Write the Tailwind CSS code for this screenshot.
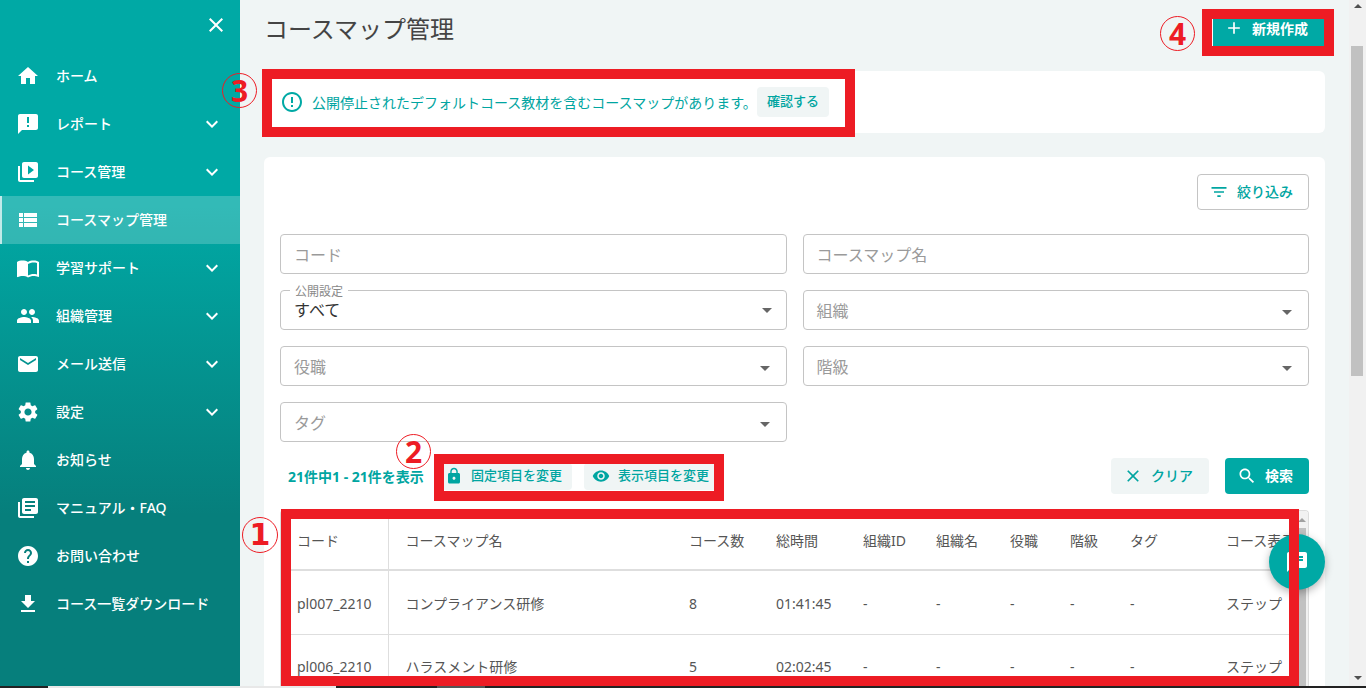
<!DOCTYPE html>
<html lang="ja">
<head>
<meta charset="utf-8">
<script src="https://cdn.jsdelivr.net/npm/@tailwindcss/browser@4"></script>
<title>コースマップ管理</title>
</head>
<body class="relative h-[688px] w-[1366px] overflow-hidden bg-[#f0f5f5] font-['Noto_Sans','Noto_Sans_CJK_JP',sans-serif] text-[14px] text-[#555]">
<div class="flex h-[686px]">
  <!-- Sidebar -->
  <aside class="flex w-[240px] shrink-0 flex-col bg-gradient-to-b from-[#00a9a5] from-30% to-[#067f7c] to-75% text-white">
    <div class="flex h-[52px] justify-end pr-[12px] pt-[13px]">
      <svg class="h-[24px] w-[24px]" viewBox="0 0 24 24" fill="currentColor"><path d="M19 6.41L17.59 5 12 10.59 6.41 5 5 6.41 10.59 12 5 17.59 6.41 19 12 13.41 17.59 19 19 17.59 13.41 12z"/></svg>
    </div>
    <nav class="flex flex-col font-medium">
      <a class="flex h-[48px] items-center pb-[2px] pl-[16px]"><svg class="mr-[16px] mt-[2px] h-[24px] w-[24px]" viewBox="0 0 24 24" fill="currentColor"><path d="M10 20v-6h4v6h5v-8h3L12 3 2 12h3v8z"/></svg>ホーム</a>
      <a class="flex h-[48px] items-center pb-[2px] pl-[16px] pr-[16px]"><svg class="mr-[16px] mt-[2px] h-[24px] w-[24px]" viewBox="0 0 24 24" fill="currentColor"><path d="M20 2H4c-1.1 0-1.99.9-1.99 2L2 22l4-4h14c1.1 0 2-.9 2-2V4c0-1.1-.9-2-2-2zm-7 9h-2V5h2v6zm0 4h-2v-2h2v2z"/></svg>レポート<svg class="ml-auto mt-[2px] h-[24px] w-[24px]" viewBox="0 0 24 24" fill="currentColor"><path d="M16.59 8.59L12 13.17 7.41 8.59 6 10l6 6 6-6z"/></svg></a>
      <a class="flex h-[48px] items-center pb-[2px] pl-[16px] pr-[16px]"><svg class="mr-[16px] mt-[2px] h-[24px] w-[24px]" viewBox="0 0 24 24" fill="currentColor"><path d="M4 6H2v14c0 1.1.9 2 2 2h14v-2H4V6zm16-4H8c-1.1 0-2 .9-2 2v12c0 1.1.9 2 2 2h12c1.1 0 2-.9 2-2V4c0-1.1-.9-2-2-2zm-8 12.5v-9l6 4.5-6 4.5z"/></svg>コース管理<svg class="ml-auto mt-[2px] h-[24px] w-[24px]" viewBox="0 0 24 24" fill="currentColor"><path d="M16.59 8.59L12 13.17 7.41 8.59 6 10l6 6 6-6z"/></svg></a>
      <a class="flex h-[48px] items-center border-l-2 border-white/70 bg-white/20 pb-[2px] pl-[14px]"><svg class="mr-[16px] mt-[2px] h-[24px] w-[24px]" viewBox="0 0 24 24" fill="currentColor"><path d="M3 14h4v-4H3v4zm0 5h4v-4H3v4zM3 9h4V5H3v4zm5 5h13v-4H8v4zm0 5h13v-4H8v4zM8 5v4h13V5H8z"/></svg>コースマップ管理</a>
      <a class="flex h-[48px] items-center pb-[2px] pl-[16px] pr-[16px]"><svg class="mr-[16px] mt-[2px] h-[24px] w-[24px]" viewBox="0 0 24 24" fill="currentColor"><path d="M21 5c-1.11-.35-2.33-.5-3.5-.5-1.95 0-4.05.4-5.5 1.5-1.45-1.1-3.55-1.5-5.5-1.5S2.45 4.9 1 6v14.65c0 .25.25.5.5.5.1 0 .15-.05.25-.05C3.1 20.45 5.05 20 6.5 20c1.95 0 4.05.4 5.5 1.5 1.35-.85 3.8-1.5 5.5-1.5 1.65 0 3.35.3 4.75 1.05.1.05.15.05.25.05.25 0 .5-.25.5-.5V6c-.6-.45-1.25-.75-2-1zm0 13.5c-1.1-.35-2.3-.5-3.5-.5-1.7 0-4.15.65-5.5 1.5V8c1.35-.85 3.8-1.5 5.5-1.5 1.2 0 2.4.15 3.5.5v11.5z"/></svg>学習サポート<svg class="ml-auto mt-[2px] h-[24px] w-[24px]" viewBox="0 0 24 24" fill="currentColor"><path d="M16.59 8.59L12 13.17 7.41 8.59 6 10l6 6 6-6z"/></svg></a>
      <a class="flex h-[48px] items-center pb-[2px] pl-[16px] pr-[16px]"><svg class="mr-[16px] mt-[2px] h-[24px] w-[24px]" viewBox="0 0 24 24" fill="currentColor"><path d="M16 11c1.66 0 2.99-1.34 2.99-3S17.66 5 16 5c-1.66 0-3 1.34-3 3s1.34 3 3 3zm-8 0c1.66 0 2.99-1.34 2.99-3S9.66 5 8 5C6.34 5 5 6.34 5 8s1.34 3 3 3zm0 2c-2.33 0-7 1.17-7 3.5V19h14v-2.5c0-2.33-4.67-3.5-7-3.5zm8 0c-.29 0-.62.02-.97.05 1.16.84 1.97 1.97 1.97 3.45V19h6v-2.5c0-2.33-4.67-3.5-7-3.5z"/></svg>組織管理<svg class="ml-auto mt-[2px] h-[24px] w-[24px]" viewBox="0 0 24 24" fill="currentColor"><path d="M16.59 8.59L12 13.17 7.41 8.59 6 10l6 6 6-6z"/></svg></a>
      <a class="flex h-[48px] items-center pb-[2px] pl-[16px] pr-[16px]"><svg class="mr-[16px] mt-[2px] h-[24px] w-[24px]" viewBox="0 0 24 24" fill="currentColor"><path d="M20 4H4c-1.1 0-1.99.9-1.99 2L2 18c0 1.1.9 2 2 2h16c1.1 0 2-.9 2-2V6c0-1.1-.9-2-2-2zm0 4l-8 5-8-5V6l8 5 8-5v2z"/></svg>メール送信<svg class="ml-auto mt-[2px] h-[24px] w-[24px]" viewBox="0 0 24 24" fill="currentColor"><path d="M16.59 8.59L12 13.17 7.41 8.59 6 10l6 6 6-6z"/></svg></a>
      <a class="flex h-[48px] items-center pb-[2px] pl-[16px] pr-[16px]"><svg class="mr-[16px] mt-[2px] h-[24px] w-[24px]" viewBox="0 0 24 24" fill="currentColor"><path d="M19.14 12.94c.04-.3.06-.61.06-.94 0-.32-.02-.64-.07-.94l2.03-1.58c.18-.14.23-.41.12-.61l-1.92-3.32c-.12-.22-.37-.29-.59-.22l-2.39.96c-.5-.38-1.03-.7-1.62-.94l-.36-2.54c-.04-.24-.24-.41-.48-.41h-3.84c-.24 0-.43.17-.47.41l-.36 2.54c-.59.24-1.13.57-1.62.94l-2.39-.96c-.22-.08-.47 0-.59.22L2.74 8.87c-.12.21-.08.47.12.61l2.03 1.58c-.05.3-.09.63-.09.94s.02.64.07.94l-2.03 1.58c-.18.14-.23.41-.12.61l1.92 3.32c.12.22.37.29.59.22l2.39-.96c.5.38 1.03.7 1.62.94l.36 2.54c.05.24.24.41.48.41h3.84c.24 0 .44-.17.47-.41l.36-2.54c.59-.24 1.13-.56 1.62-.94l2.39.96c.22.08.47 0 .59-.22l1.92-3.32c.12-.22.07-.47-.12-.61l-2.01-1.58zM12 15.6c-1.98 0-3.6-1.62-3.6-3.6s1.62-3.6 3.6-3.6 3.6 1.62 3.6 3.6-1.62 3.6-3.6 3.6z"/></svg>設定<svg class="ml-auto mt-[2px] h-[24px] w-[24px]" viewBox="0 0 24 24" fill="currentColor"><path d="M16.59 8.59L12 13.17 7.41 8.59 6 10l6 6 6-6z"/></svg></a>
      <a class="flex h-[48px] items-center pb-[2px] pl-[16px]"><svg class="mr-[16px] mt-[2px] h-[24px] w-[24px]" viewBox="0 0 24 24" fill="currentColor"><path d="M12 22c1.1 0 2-.9 2-2h-4c0 1.1.89 2 2 2zm6-6v-5c0-3.07-1.64-5.64-4.5-6.32V4c0-.83-.67-1.5-1.5-1.5s-1.5.67-1.5 1.5v.68C7.63 5.36 6 7.92 6 11v5l-2 2v1h16v-1l-2-2z"/></svg>お知らせ</a>
      <a class="flex h-[48px] items-center pb-[2px] pl-[16px]"><svg class="mr-[16px] mt-[2px] h-[24px] w-[24px]" viewBox="0 0 24 24" fill="currentColor"><path d="M4 6H2v14c0 1.1.9 2 2 2h14v-2H4V6zm16-4H8c-1.1 0-2 .9-2 2v12c0 1.1.9 2 2 2h12c1.1 0 2-.9 2-2V4c0-1.1-.9-2-2-2zm-1 9H9V9h10v2zm-4 4H9v-2h6v2zm4-8H9V5h10v2z"/></svg>マニュアル・FAQ</a>
      <a class="flex h-[48px] items-center pb-[2px] pl-[16px]"><svg class="mr-[16px] mt-[2px] h-[24px] w-[24px]" viewBox="0 0 24 24" fill="currentColor"><path d="M12 2C6.48 2 2 6.48 2 12s4.48 10 10 10 10-4.48 10-10S17.52 2 12 2zm1 17h-2v-2h2v2zm2.07-7.75l-.9.92C13.45 12.9 13 13.5 13 15h-2v-.5c0-1.1.45-2.1 1.17-2.83l1.24-1.26c.37-.36.59-.86.59-1.41 0-1.1-.9-2-2-2s-2 .9-2 2H8c0-2.21 1.79-4 4-4s4 1.79 4 4c0 .88-.36 1.68-.93 2.25z"/></svg>お問い合わせ</a>
      <a class="flex h-[48px] items-center pb-[2px] pl-[16px]"><svg class="mr-[16px] mt-[2px] h-[24px] w-[24px]" viewBox="0 0 24 24" fill="currentColor"><path d="M19 9h-4V3H9v6H5l7 7 7-7zM5 18v2h14v-2H5z"/></svg>コース一覧ダウンロード</a>
    </nav>
  </aside>

  <!-- Main -->
  <main class="w-[1109px] shrink-0 overflow-hidden px-[24px]">
    <header class="flex h-[71px] items-start justify-between">
      <h1 class="pt-[11px] text-[24px] font-normal leading-[36px] text-[#444]">コースマップ管理</h1>
      <button class="mr-[1px] mt-[10px] flex h-[38px] w-[112px] items-center border-l border-white bg-[#00a9a5] pb-[2px] pl-[11px] text-[14px] font-bold text-white"><svg class="mr-[8px] h-[20px] w-[20px]" viewBox="0 0 24 24" fill="currentColor"><path d="M19 13h-6v6h-2v-6H5v-2h6V5h2v6h6v2z"/></svg>新規作成</button>
    </header>

    <section class="mb-[24px] flex h-[62px] items-center rounded-[6px] bg-white pl-[16px]">
      <svg class="mr-[8px] h-[24px] w-[24px] text-[#00a9a5]" viewBox="0 0 24 24" fill="currentColor"><path d="M11 15h2v2h-2zm0-8h2v6h-2zm.99-5C6.47 2 2 6.48 2 12s4.47 10 9.99 10C17.52 22 22 17.52 22 12S17.52 2 11.99 2zM12 20c-4.42 0-8-3.58-8-8s3.58-8 8-8 8 3.58 8 8-3.58 8-8 8z"/></svg>
      <span class="w-[445px] whitespace-nowrap text-[#00a5a1]">公開停止されたデフォルトコース教材を含むコースマップがあります。</span>
      <button class="flex h-[30px] w-[72px] items-center justify-center rounded-[4px] bg-[#f0f5f5] text-[13px] font-medium text-[#00a5a1]">確認する</button>
    </section>

    <section class="rounded-t-[6px] bg-white px-[16px] pt-[17px]">
      <div class="mb-[24px] flex justify-end">
        <button class="flex h-[36px] w-[112px] items-center rounded-[4px] border border-[#c4c4c4] pb-[2px] pl-[11px] text-[14px] font-medium text-[#00a5a1]"><svg class="mr-[8px] mt-[2px] h-[20px] w-[20px]" viewBox="0 0 24 24" fill="currentColor"><path d="M10 18h4v-2h-4v2zM3 6v2h18V6H3zm3 7h12v-2H6v2z"/></svg>絞り込み</button>
      </div>

      <div class="grid grid-cols-2 gap-x-[16px] gap-y-[16px] text-[16px] leading-[24px]">
        <div class="flex h-[40px] items-center rounded-[4px] border border-[#c4c4c4] px-[13px] pt-[2px] text-[#9a9a9a]">コード</div>
        <div class="flex h-[40px] items-center rounded-[4px] border border-[#c4c4c4] px-[13px] pt-[2px] text-[#9a9a9a]">コースマップ名</div>
        <div class="relative flex h-[40px] items-center justify-between rounded-[4px] border border-[#c4c4c4] px-[13px] pr-[14px] text-[#333]">
          <span class="absolute -top-[6px] left-[9px] bg-white px-[5px] text-[12px] leading-[14px] text-[#888]">公開設定</span>
          <span>すべて</span>
          <span class="h-0 w-0 border-x-[5px] border-t-[5px] border-x-transparent border-t-[#666]"></span>
        </div>
        <div class="flex h-[40px] items-center justify-between rounded-[4px] border border-[#c4c4c4] px-[13px] pr-[16px] pt-[2px] text-[#9a9a9a]">組織<span class="mt-[2px] h-0 w-0 border-x-[5px] border-t-[5px] border-x-transparent border-t-[#666]"></span></div>
        <div class="flex h-[40px] items-center justify-between rounded-[4px] border border-[#c4c4c4] px-[13px] pr-[16px] pt-[2px] text-[#9a9a9a]">役職<span class="mt-[2px] h-0 w-0 border-x-[5px] border-t-[5px] border-x-transparent border-t-[#666]"></span></div>
        <div class="flex h-[40px] items-center justify-between rounded-[4px] border border-[#c4c4c4] px-[13px] pr-[16px] pt-[2px] text-[#9a9a9a]">階級<span class="mt-[2px] h-0 w-0 border-x-[5px] border-t-[5px] border-x-transparent border-t-[#666]"></span></div>
        <div class="flex h-[40px] items-center justify-between rounded-[4px] border border-[#c4c4c4] px-[13px] pr-[16px] pt-[2px] text-[#9a9a9a]">タグ<span class="mt-[2px] h-0 w-0 border-x-[5px] border-t-[5px] border-x-transparent border-t-[#666]"></span></div>
      </div>

      <div class="mt-[16px] flex h-[36px] items-center">
        <span class="ml-[8px] w-[150px] whitespace-nowrap text-[14px] font-bold text-[#00a5a1]">21件中1 - 21件を表示</span>
        <button class="flex h-[27px] w-[134px] items-center rounded-[4px] bg-[#f0f5f5] pl-[7px] text-[13px] font-medium text-[#00a5a1]"><svg class="mr-[8px] h-[18px] w-[18px]" viewBox="0 0 24 24" fill="currentColor"><path d="M18 8h-1V6c0-2.76-2.24-5-5-5S7 3.24 7 6v2H6c-1.1 0-2 .9-2 2v10c0 1.1.9 2 2 2h12c1.1 0 2-.9 2-2V10c0-1.1-.9-2-2-2zm-6 9c-1.1 0-2-.9-2-2s.9-2 2-2 2 .9 2 2-.9 2-2 2zm3.1-9H8.9V6c0-1.71 1.39-3.1 3.1-3.1 1.71 0 3.1 1.39 3.1 3.1v2z"/></svg>固定項目を変更</button>
        <button class="ml-[12px] flex h-[27px] w-[134px] items-center rounded-[4px] bg-[#f0f5f5] pl-[8px] text-[13px] font-medium text-[#00a5a1]"><svg class="mr-[8px] h-[18px] w-[18px]" viewBox="0 0 24 24" fill="currentColor"><path d="M12 4.5C7 4.5 2.73 7.61 1 12c1.73 4.39 6 7.5 11 7.5s9.27-3.11 11-7.5c-1.73-4.39-6-7.5-11-7.5zM12 17c-2.76 0-5-2.24-5-5s2.24-5 5-5 5 2.24 5 5-2.24 5-5 5zm0-8c-1.66 0-3 1.34-3 3s1.34 3 3 3 3-1.34 3-3-1.34-3-3-3z"/></svg>表示項目を変更</button>
        <button class="ml-auto flex h-[36px] w-[98px] items-center rounded-[4px] bg-[#f0f5f5] pb-[2px] pl-[12px] text-[14px] font-medium text-[#00a5a1]"><svg class="mr-[8px] mt-[2px] h-[20px] w-[20px]" viewBox="0 0 24 24" fill="currentColor"><path d="M19 6.41L17.59 5 12 10.59 6.41 5 5 6.41 10.59 12 5 17.59 6.41 19 12 13.41 17.59 19 19 17.59 13.41 12z"/></svg>クリア</button>
        <button class="ml-[16px] flex h-[36px] w-[84px] items-center rounded-[4px] bg-[#00a9a5] pb-[2px] pl-[12px] text-[14px] font-bold text-white"><svg class="mr-[8px] mt-[2px] h-[20px] w-[20px]" viewBox="0 0 24 24" fill="currentColor"><path d="M15.5 14h-.79l-.28-.27C15.41 12.59 16 11.11 16 9.5 16 5.91 13.09 3 9.5 3S3 5.91 3 9.5 5.91 16 9.5 16c1.61 0 3.09-.59 4.23-1.57l.27.28v.79l5 4.99L20.49 19l-4.99-5zm-6 0C7.01 14 5 11.99 5 9.5S7.01 5 9.5 5 14 7.01 14 9.5 11.99 14 9.5 14z"/></svg>検索</button>
      </div>

      <div class="mt-[16px] flex h-[200px] overflow-hidden rounded-t-[4px] border border-b-0 border-[#dcdcdc]">
        <div class="flex-1 overflow-hidden">
          <table class="w-[1041px] table-fixed border-collapse text-[14px] text-[#555]">
            <colgroup><col class="w-[107px]"><col class="w-[284px]"><col class="w-[87px]"><col class="w-[87px]"><col class="w-[73px]"><col class="w-[74px]"><col class="w-[60px]"><col class="w-[60px]"><col class="w-[96px]"><col class="w-[113px]"></colgroup>
            <thead>
              <tr class="h-[59px] border-b-2 border-[#dedede] text-left">
                <th class="border-r border-[#dedede] pl-[16px] pt-[1px] font-normal">コード</th>
                <th class="pl-[17px] pt-[1px] font-normal">コースマップ名</th>
                <th class="pl-[17px] pt-[1px] font-normal">コース数</th>
                <th class="pl-[17px] pt-[1px] font-normal">総時間</th>
                <th class="pl-[17px] pt-[1px] font-normal">組織ID</th>
                <th class="pl-[17px] pt-[1px] font-normal">組織名</th>
                <th class="pl-[17px] pt-[1px] font-normal">役職</th>
                <th class="pl-[17px] pt-[1px] font-normal">階級</th>
                <th class="pl-[17px] pt-[1px] font-normal">タグ</th>
                <th class="whitespace-nowrap pl-[17px] pt-[1px] font-normal">コース表示</th>
              </tr>
            </thead>
            <tbody>
              <tr class="h-[64px] border-b border-[#dedede]">
                <td class="border-r border-[#dedede] pl-[16px] pt-[2px]">pl007_2210</td><td class="pl-[17px] pt-[2px]">コンプライアンス研修</td><td class="pl-[17px] pt-[2px]">8</td><td class="pl-[17px] pt-[2px]">01:41:45</td><td class="pl-[17px] pt-[2px]">-</td><td class="pl-[17px] pt-[2px]">-</td><td class="pl-[17px] pt-[2px]">-</td><td class="pl-[17px] pt-[2px]">-</td><td class="pl-[17px] pt-[2px]">-</td><td class="pl-[17px] pt-[2px]">ステップ</td>
              </tr>
              <tr class="h-[64px]">
                <td class="border-r border-[#dedede] pl-[16px]">pl006_2210</td><td class="pl-[17px]">ハラスメント研修</td><td class="pl-[17px]">5</td><td class="pl-[17px]">02:02:45</td><td class="pl-[17px]">-</td><td class="pl-[17px]">-</td><td class="pl-[17px]">-</td><td class="pl-[17px]">-</td><td class="pl-[17px]">-</td><td class="pl-[17px]">ステップ</td>
              </tr>
            </tbody>
          </table>
        </div>
        <div class="flex w-[12px] shrink-0 flex-col bg-[#f1f1f1]">
          <div class="flex h-[17px] justify-center pt-[7px]"><span class="h-0 w-0 border-x-[4px] border-b-[4px] border-x-transparent border-b-[#a0a0a0]"></span></div>
          <div class="mr-[2px] flex-1 bg-[#c1c1c1]"></div>
        </div>
      </div>
    </section>
  </main>

  <!-- Page scrollbar -->
  <div class="flex w-[17px] shrink-0 flex-col bg-[#f1f1f1]">
    <div class="flex h-[46px] w-full justify-center pt-[4px]"><span class="h-0 w-0 border-x-[4px] border-b-[4px] border-x-transparent border-b-[#505050]"></span></div>
    <div class="ml-[2px] h-[330px] w-[12px] bg-[#c1c1c1]"></div>
    <div class="flex-1"></div>
    <span class="mb-[6px] h-0 w-0 self-center border-x-[4px] border-t-[4px] border-x-transparent border-t-[#505050]"></span>
  </div>
</div>

<!-- Taskbar sliver -->
<div class="flex h-[2px]">
  <div class="w-[48px] bg-[#222]"></div>
  <div class="w-[288px] bg-[#e8e8e8]"></div>
  <div class="w-[101px] bg-[#222]"></div>
  <div class="w-[48px] bg-[#555]"></div>
  <div class="flex-1 bg-[#222]"></div>
</div>

<!-- Floating action button -->
<button class="absolute left-[1269px] top-[534px] flex h-[56px] w-[56px] items-center justify-center rounded-full bg-[#00a9a5] text-white shadow-[0_3px_8px_rgba(0,0,0,0.3)]"><svg class="h-[24px] w-[24px]" viewBox="0 0 24 24" fill="currentColor"><path d="M20 2H4c-1.1 0-1.99.9-1.99 2L2 22l4-4h14c1.1 0 2-.9 2-2V4c0-1.1-.9-2-2-2zM6 9h12v2H6V9zm8 5H6v-2h8v2zm4-6H6V6h12v2z"/></svg></button>

<!-- Annotation overlays -->
<div class="pointer-events-none absolute left-[281px] top-[509px] h-[177px] w-[1018px] border-[10px] border-[#ed1c24]"></div>
<div class="pointer-events-none absolute left-[434px] top-[454px] h-[47px] w-[290px] border-[10px] border-[#ed1c24]"></div>
<div class="pointer-events-none absolute left-[262px] top-[69px] h-[68px] w-[593px] border-[10px] border-[#ed1c24]"></div>
<div class="pointer-events-none absolute left-[1202px] top-[9px] h-[47px] w-[132px] border-[10px] border-[#ed1c24]"></div>

<div class="absolute left-[242px] top-[517px] flex h-[36px] w-[36px] items-center justify-center rounded-full border border-[#ed1c24] font-['DejaVu_Sans'] text-[30px] font-bold leading-none text-[#ed1c24]">1</div>
<div class="absolute left-[396px] top-[434px] flex h-[35px] w-[35px] items-center justify-center rounded-full border border-[#ed1c24] text-[30px] font-bold leading-none text-[#ed1c24]">2</div>
<div class="absolute left-[222px] top-[73px] flex h-[35px] w-[35px] items-center justify-center rounded-full border border-[#ed1c24] text-[30px] font-bold leading-none text-[#ed1c24]">3</div>
<div class="absolute left-[1160px] top-[16px] flex h-[35px] w-[35px] items-center justify-center rounded-full border border-[#ed1c24] text-[30px] font-bold leading-none text-[#ed1c24]">4</div>
</body>
</html>
